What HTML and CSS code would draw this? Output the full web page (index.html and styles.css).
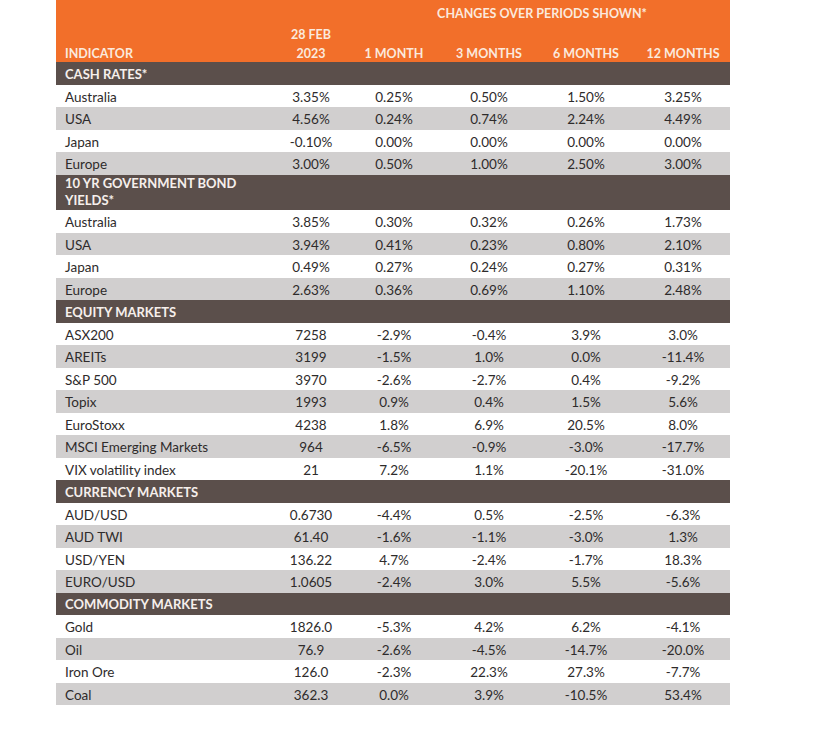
FILE: index.html
```html
<!DOCTYPE html>
<html>
<head>
<meta charset="utf-8">
<link rel="stylesheet" href="styles.css">
</head>
<body>
<div class="table">
  <div class="thead">
    <div class="span">CHANGES OVER PERIODS SHOWN*</div>
    <div class="hc ind">INDICATOR</div>
    <div class="hc">28 FEB<br>2023</div>
    <div class="hc">1 MONTH</div>
    <div class="hc">3 MONTHS</div>
    <div class="hc">6 MONTHS</div>
    <div class="hc last">12 MONTHS</div>
  </div>

  <div class="section">CASH RATES*</div>
  <div class="group">
    <div class="row"><span>Australia</span><span>3.35%</span><span>0.25%</span><span>0.50%</span><span>1.50%</span><span>3.25%</span></div>
    <div class="row"><span>USA</span><span>4.56%</span><span>0.24%</span><span>0.74%</span><span>2.24%</span><span>4.49%</span></div>
    <div class="row"><span>Japan</span><span>-0.10%</span><span>0.00%</span><span>0.00%</span><span>0.00%</span><span>0.00%</span></div>
    <div class="row"><span>Europe</span><span>3.00%</span><span>0.50%</span><span>1.00%</span><span>2.50%</span><span>3.00%</span></div>
  </div>

  <div class="section double"><span class="stitle">10 YR GOVERNMENT BOND YIELDS*</span></div>
  <div class="group">
    <div class="row"><span>Australia</span><span>3.85%</span><span>0.30%</span><span>0.32%</span><span>0.26%</span><span>1.73%</span></div>
    <div class="row"><span>USA</span><span>3.94%</span><span>0.41%</span><span>0.23%</span><span>0.80%</span><span>2.10%</span></div>
    <div class="row"><span>Japan</span><span>0.49%</span><span>0.27%</span><span>0.24%</span><span>0.27%</span><span>0.31%</span></div>
    <div class="row"><span>Europe</span><span>2.63%</span><span>0.36%</span><span>0.69%</span><span>1.10%</span><span>2.48%</span></div>
  </div>

  <div class="section">EQUITY MARKETS</div>
  <div class="group">
    <div class="row"><span>ASX200</span><span>7258</span><span>-2.9%</span><span>-0.4%</span><span>3.9%</span><span>3.0%</span></div>
    <div class="row"><span>AREITs</span><span>3199</span><span>-1.5%</span><span>1.0%</span><span>0.0%</span><span>-11.4%</span></div>
    <div class="row"><span>S&amp;P 500</span><span>3970</span><span>-2.6%</span><span>-2.7%</span><span>0.4%</span><span>-9.2%</span></div>
    <div class="row"><span>Topix</span><span>1993</span><span>0.9%</span><span>0.4%</span><span>1.5%</span><span>5.6%</span></div>
    <div class="row"><span>EuroStoxx</span><span>4238</span><span>1.8%</span><span>6.9%</span><span>20.5%</span><span>8.0%</span></div>
    <div class="row"><span>MSCI Emerging Markets</span><span>964</span><span>-6.5%</span><span>-0.9%</span><span>-3.0%</span><span>-17.7%</span></div>
    <div class="row"><span>VIX volatility index</span><span>21</span><span>7.2%</span><span>1.1%</span><span>-20.1%</span><span>-31.0%</span></div>
  </div>

  <div class="section">CURRENCY MARKETS</div>
  <div class="group">
    <div class="row"><span>AUD/USD</span><span>0.6730</span><span>-4.4%</span><span>0.5%</span><span>-2.5%</span><span>-6.3%</span></div>
    <div class="row"><span>AUD TWI</span><span>61.40</span><span>-1.6%</span><span>-1.1%</span><span>-3.0%</span><span>1.3%</span></div>
    <div class="row"><span>USD/YEN</span><span>136.22</span><span>4.7%</span><span>-2.4%</span><span>-1.7%</span><span>18.3%</span></div>
    <div class="row"><span>EURO/USD</span><span>1.0605</span><span>-2.4%</span><span>3.0%</span><span>5.5%</span><span>-5.6%</span></div>
  </div>

  <div class="section">COMMODITY MARKETS</div>
  <div class="group">
    <div class="row"><span>Gold</span><span>1826.0</span><span>-5.3%</span><span>4.2%</span><span>6.2%</span><span>-4.1%</span></div>
    <div class="row"><span>Oil</span><span>76.9</span><span>-2.6%</span><span>-4.5%</span><span>-14.7%</span><span>-20.0%</span></div>
    <div class="row"><span>Iron Ore</span><span>126.0</span><span>-2.3%</span><span>22.3%</span><span>27.3%</span><span>-7.7%</span></div>
    <div class="row"><span>Coal</span><span>362.3</span><span>0.0%</span><span>3.9%</span><span>-10.5%</span><span>53.4%</span></div>
  </div>
</div>
</body>
</html>
```

FILE: styles.css
```css
html, body {
  margin: 0;
  padding: 0;
  background: #ffffff;
}

body {
  font-family: Lato, "Liberation Sans", sans-serif;
  font-size: 13.5px;
  color: #2e2b2b;
}

.table {
  width: 674px;
  margin-left: 56px;
}

.thead {
  display: grid;
  grid-template-columns: 212px 86px 80px 110px 84px 102px;
  grid-template-rows: 1fr auto;
  height: 62px;
  background: #f26f2a;
  color: #fbe9dd;
  font-weight: 700;
  font-size: 12.5px;
}

.thead .span {
  grid-column: 3 / 7;
  grid-row: 1;
  text-align: center;
  padding-top: 5px;
  line-height: 18px;
}

.thead .hc {
  grid-row: 2;
  align-self: end;
  text-align: center;
  line-height: 18.5px;
  margin-bottom: -1px;
}

.thead .ind {
  text-align: left;
  padding-left: 9px;
}

.thead .last {
  padding-left: 8px;
}

.section {
  height: 22.5px;
  box-sizing: border-box;
  padding-top: 1.5px;
  line-height: 21px;
  background: #5b4f4b;
  color: #f6efec;
  font-weight: 700;
  font-size: 13px;
  padding-left: 9px;
}

.section.double {
  height: 35.5px;
  padding-top: 0;
  line-height: 17.5px;
  display: flex;
  align-items: center;
}

.section .stitle {
  width: 190px;
}

.row {
  display: grid;
  grid-template-columns: 212px 86px 80px 110px 84px 102px;
  height: 22.5px;
  box-sizing: border-box;
  padding-top: 2px;
  line-height: 20.5px;
}

.row span {
  text-align: center;
}

.row span:first-child {
  text-align: left;
  padding-left: 9px;
}

.row span:last-child {
  padding-left: 8px;
}

.group .row:nth-child(even) {
  background: #d1cfcf;
}
```
